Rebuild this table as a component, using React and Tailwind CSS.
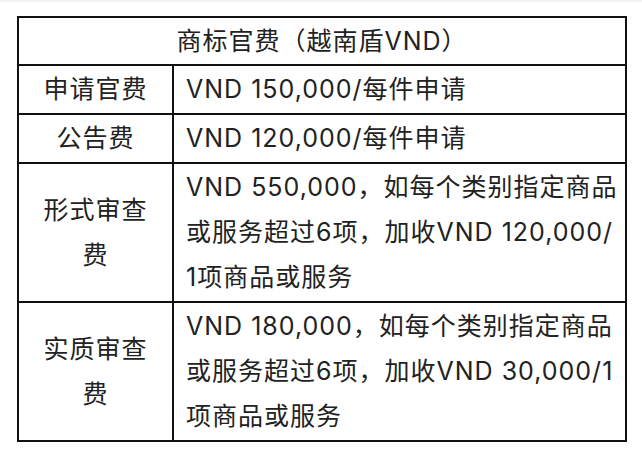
const ROWS = [
  { label: ['申请官费'], lines: ['VND 150,000/每件申请'] },
  { label: ['公告费'], lines: ['VND 120,000/每件申请'] },
  {
    label: ['形式审查', '费'],
    lines: ['VND 550,000，如每个类别指定商品', '或服务超过6项，加收VND 120,000/', '1项商品或服务'],
  },
  {
    label: ['实质审查', '费'],
    lines: ['VND 180,000，如每个类别指定商品', '或服务超过6项，加收VND 30,000/1', '项商品或服务'],
  },
];

export default function App() {
  return (
    <div
      className="h-[452px] w-[642px] bg-white text-[#222] text-[25px] tracking-[1px]"
      style={{ fontFamily: "Inter, 'Noto Sans CJK SC', sans-serif" }}
    >
      <div className="h-[2px] bg-[#f3f3f3]" />
      <div className="ml-[17px] mt-[14px] w-[610px] border-2 border-[#111]">
        {/* header */}
        <div className="flex h-[48px] items-center justify-center border-b-2 border-[#111] leading-[45px]">
          商标官费（越南盾VND）
        </div>
        {ROWS.map((r, i) => (
          <div
            key={i}
            className={`grid grid-cols-[155px_1fr] ${i < ROWS.length - 1 ? 'border-b-2 border-[#111]' : ''}`}
          >
            <div className="flex flex-col items-center justify-center border-r-2 border-[#111] py-px leading-[45px]">
              {r.label.map((l, j) => <div key={j} className="whitespace-nowrap">{l}</div>)}
            </div>
            <div className="py-px pl-[12px] leading-[45px]">
              {r.lines.map((l, j) => <div key={j} className="whitespace-nowrap">{l}</div>)}
            </div>
          </div>
        ))}
      </div>
    </div>
  );
}
